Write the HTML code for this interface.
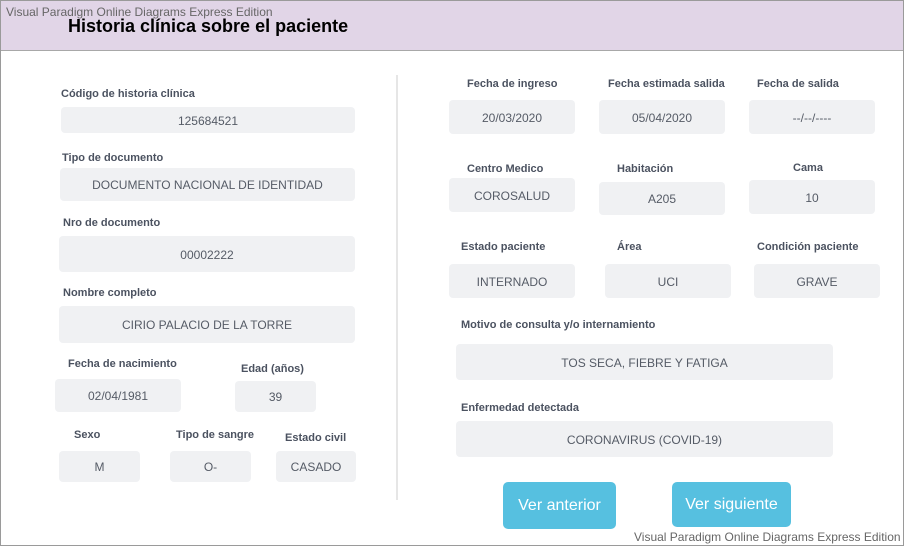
<!DOCTYPE html>
<html><head><meta charset="utf-8"><style>
*{margin:0;padding:0;box-sizing:border-box}
body{width:906px;height:548px;background:#fff;position:relative;overflow:hidden;font-family:"Liberation Sans",Arial,sans-serif}
.frame{position:absolute;left:0;top:0;width:904px;height:546px;border:1px solid #9a9a9a}
.hdr{position:absolute;left:1px;top:1px;width:902px;height:50px;background:#e1d5e7;border-bottom:1px solid #a8a8a8}
.wm{position:absolute;font-size:12px;color:#666;white-space:nowrap}
.title{position:absolute;left:68px;top:16px;font-size:18px;font-weight:bold;color:#000}
.l{position:absolute;font-size:11px;font-weight:bold;color:#4b5260;white-space:nowrap;margin-top:1px}
.b{position:absolute;background:#f0f1f3;border-radius:4px;font-size:12px;color:#555b66;display:flex;align-items:center;justify-content:center;white-space:nowrap;padding-top:1px}
.div{position:absolute;left:396px;top:75px;width:2px;height:425px;background:#e6e6e6}
.btn{position:absolute;background:#56c0e0;border-radius:5px;color:#fff;font-size:16px;display:flex;align-items:center;justify-content:center;padding-top:1px}
</style></head><body>
<div class="frame"></div>
<div class="hdr"></div>
<div class="wm" style="left:6px;top:5px">Visual Paradigm Online Diagrams Express Edition</div>
<div class="title">Historia clínica sobre el paciente</div>
<div class="div"></div>

<div class="l" style="left:61px;top:87px">Código de historia clínica</div>
<div class="b" style="left:61px;top:107px;width:294px;height:26px">125684521</div>
<div class="l" style="left:62px;top:151px">Tipo de documento</div>
<div class="b" style="left:60px;top:168px;width:295px;height:33px">DOCUMENTO NACIONAL DE IDENTIDAD</div>
<div class="l" style="left:63px;top:216px">Nro de documento</div>
<div class="b" style="left:59px;top:236px;width:296px;height:36px">00002222</div>
<div class="l" style="left:63px;top:286px">Nombre completo</div>
<div class="b" style="left:59px;top:306px;width:296px;height:37px">CIRIO PALACIO DE LA TORRE</div>
<div class="l" style="left:68px;top:357px">Fecha de nacimiento</div>
<div class="b" style="left:55px;top:379px;width:126px;height:33px">02/04/1981</div>
<div class="l" style="left:241px;top:362px">Edad (años)</div>
<div class="b" style="left:235px;top:381px;width:81px;height:31px">39</div>
<div class="l" style="left:74px;top:428px">Sexo</div>
<div class="b" style="left:59px;top:451px;width:81px;height:31px">M</div>
<div class="l" style="left:176px;top:428px">Tipo de sangre</div>
<div class="b" style="left:170px;top:451px;width:81px;height:31px">O-</div>
<div class="l" style="left:285px;top:431px">Estado civil</div>
<div class="b" style="left:276px;top:451px;width:80px;height:31px">CASADO</div>

<div class="l" style="left:467px;top:77px">Fecha de ingreso</div>
<div class="b" style="left:449px;top:100px;width:126px;height:34px">20/03/2020</div>
<div class="l" style="left:608px;top:77px">Fecha estimada salida</div>
<div class="b" style="left:599px;top:100px;width:126px;height:34px">05/04/2020</div>
<div class="l" style="left:757px;top:77px">Fecha de salida</div>
<div class="b" style="left:749px;top:100px;width:126px;height:34px">--/--/----</div>
<div class="l" style="left:467px;top:162px">Centro Medico</div>
<div class="b" style="left:449px;top:178px;width:126px;height:34px">COROSALUD</div>
<div class="l" style="left:617px;top:162px">Habitación</div>
<div class="b" style="left:599px;top:182px;width:126px;height:33px">A205</div>
<div class="l" style="left:793px;top:161px">Cama</div>
<div class="b" style="left:749px;top:180px;width:126px;height:34px">10</div>
<div class="l" style="left:461px;top:240px">Estado paciente</div>
<div class="b" style="left:449px;top:264px;width:126px;height:34px">INTERNADO</div>
<div class="l" style="left:617px;top:240px">Área</div>
<div class="b" style="left:605px;top:264px;width:126px;height:34px">UCI</div>
<div class="l" style="left:757px;top:240px">Condición paciente</div>
<div class="b" style="left:754px;top:264px;width:126px;height:34px">GRAVE</div>
<div class="l" style="left:461px;top:318px">Motivo de consulta y/o internamiento</div>
<div class="b" style="left:456px;top:344px;width:377px;height:36px">TOS SECA, FIEBRE Y FATIGA</div>
<div class="l" style="left:461px;top:401px">Enfermedad detectada</div>
<div class="b" style="left:456px;top:421px;width:377px;height:36px">CORONAVIRUS (COVID-19)</div>

<div class="btn" style="left:503px;top:482px;width:113px;height:47px">Ver anterior</div>
<div class="btn" style="left:672px;top:482px;width:119px;height:45px">Ver siguiente</div>
<div class="wm" style="left:634px;top:530px">Visual Paradigm Online Diagrams Express Edition</div>
</body></html>
